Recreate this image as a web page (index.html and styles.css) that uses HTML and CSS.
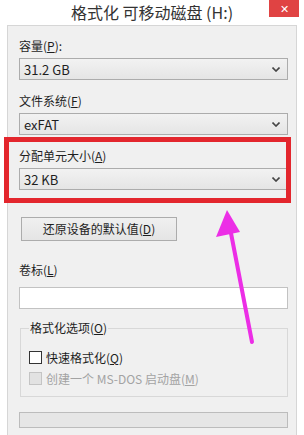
FILE: index.html
```html
<!DOCTYPE html>
<html>
<head>
  <link rel="stylesheet" href="styles.css">
</head>
<body>
  <div class="window">
    <div class="titlebar">
      <span></span>
      <div class="title">格式化 可移动磁盘 (H:)</div>
      <div class="close">✕</div>
    </div>

    <div class="panel">
      <div class="label">容量(<u>P</u>):</div>
      <div class="select">
        <span>31.2 GB</span>
        <svg class="chevron" width="8" height="5" viewBox="0 0 8 5"><polyline points="0.5,0.5 4,4 7.5,0.5" fill="none" stroke="#444" stroke-width="1.6"/></svg>
      </div>

      <div class="label">文件系统(<u>F</u>)</div>
      <div class="select">
        <span>exFAT</span>
        <svg class="chevron" width="8" height="5" viewBox="0 0 8 5"><polyline points="0.5,0.5 4,4 7.5,0.5" fill="none" stroke="#444" stroke-width="1.6"/></svg>
      </div>

      <div class="label">分配单元大小(<u>A</u>)</div>
      <div class="select">
        <span>32 KB</span>
        <svg class="chevron" width="8" height="5" viewBox="0 0 8 5"><polyline points="0.5,0.5 4,4 7.5,0.5" fill="none" stroke="#444" stroke-width="1.6"/></svg>
      </div>

      <div class="button">还原设备的默认值(<u>D</u>)</div>

      <div class="label label-volume">卷标(<u>L</u>)</div>
      <div class="textbox"></div>

      <fieldset class="options">
        <legend>格式化选项(<u>O</u>)</legend>
        <div class="check-row">
          <span class="checkbox"></span>
          <span>快速格式化(<u>Q</u>)</span>
        </div>
        <div class="check-row disabled">
          <span class="checkbox"></span>
          <span>创建一个 MS-DOS 启动盘(<u>M</u>)</span>
        </div>
      </fieldset>

      <div class="progress"></div>
    </div>
  </div>

  <!-- annotation drawn over the dialog -->
  <svg class="annotation" width="304" height="435" viewBox="0 0 304 435">
    <rect x="6.5" y="139.5" width="282" height="61" fill="none" stroke="#e3262d" stroke-width="5"/>
    <line x1="252" y1="342" x2="230" y2="228" stroke="#ec2ee6" stroke-width="4" stroke-linecap="round"/>
    <polygon points="227,210 216,237 240,232" fill="#ec2ee6"/>
  </svg>
</body>
</html>
```

FILE: styles.css
```css
body {
  margin: 0;
  background: #fff;
  font-family: "Noto Sans CJK SC", "Noto Sans", sans-serif;
  font-size: 12px;
  color: #1e1e1e;
}

u {
  text-underline-offset: 1px;
}

.window {
  width: 304px;
  height: 435px;
  display: flex;
  flex-direction: column;
  overflow: hidden;
}

.titlebar {
  height: 25px;
  display: grid;
  grid-template-columns: 30px 1fr 30px;
  padding: 0 5px;
}

.title {
  text-align: center;
  font-size: 16px;
  line-height: 25px;
  color: #333;
}

.close {
  height: 17px;
  background: #e04343;
  color: #fff;
  font-size: 11px;
  line-height: 17px;
  text-align: center;
}

.panel {
  flex: 1;
  margin: 0 7px 0 7px;
  border: 1px solid #d6d6d6;
  border-bottom: none;
  background: #f0f0f0;
  padding: 12px 0 0 11px;
}

.label {
  line-height: 16px;
  margin-bottom: 4px;
}

.select {
  width: 269px;
  height: 22px;
  box-sizing: border-box;
  border: 1px solid #acacac;
  background: linear-gradient(#f2f2f2, #e5e5e5);
  padding: 0 4px 0 4px;
  display: flex;
  align-items: center;
  justify-content: space-between;
  font-size: 13px;
  margin-bottom: 13px;
}

.chevron {
  margin-right: 3px;
}

.button {
  width: 156px;
  height: 24px;
  box-sizing: border-box;
  margin: 27px 0 0 2px;
  border: 1px solid #acacac;
  background: linear-gradient(#f0f0f0, #e5e5e5);
  text-align: center;
  line-height: 22px;
  font-size: 12px;
}

.label-volume {
  margin-top: 21px;
  margin-bottom: 9px;
}

.textbox {
  width: 269px;
  height: 22px;
  box-sizing: border-box;
  border: 1px solid #c2c2c2;
  background: #fff;
}

.options {
  width: 268px;
  box-sizing: border-box;
  margin: 11px 0 0 1px;
  padding: 0 8px 7px 8px;
  border: 1px solid #d8d8d8;
}

.options legend {
  padding: 0 1px;
  line-height: 16px;
}

.check-row {
  display: flex;
  align-items: center;
  gap: 4px;
  height: 21px;
}

.check-row:first-of-type {
  margin-top: 11px;
}

.checkbox {
  width: 11px;
  height: 11px;
  border: 1px solid #333;
  background: #fff;
}

.check-row.disabled {
  color: #a3a3a3;
}

.check-row.disabled .checkbox {
  border-color: #c4c4c4;
  background: #e2e2e2;
}

.progress {
  width: 269px;
  height: 16px;
  box-sizing: border-box;
  margin-top: 15px;
  border: 1px solid #bcbcbc;
  background: #e6e6e6;
}

.annotation {
  position: absolute;
  left: 0;
  top: 0;
  pointer-events: none;
}
```
